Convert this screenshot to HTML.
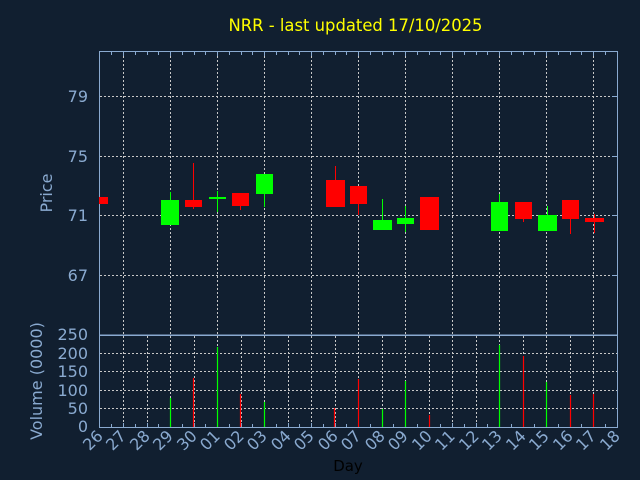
<!DOCTYPE html>
<html><head><meta charset="utf-8"><style>
html,body{margin:0;padding:0;background:#111f30;}
svg{display:block;font-family:"DejaVu Sans","Liberation Sans",sans-serif;}
</style></head><body>
<svg width="640" height="480" viewBox="0 0 640 480" xmlns="http://www.w3.org/2000/svg">
<rect width="640" height="480" fill="#111f30"/>
<text x="355.5" y="31" fill="#ffff00" font-size="16.4" text-anchor="middle">NRR - last updated 17/10/2025</text>
<g stroke="#c8c8c8" stroke-width="1" stroke-dasharray="2,2" fill="none">
<path d="M100 96.5H617M100 156.5H617M100 215.5H617M100 275.5H617"/>
<path d="M123.5 52V335M170.5 52V335M217.5 52V335M264.5 52V335M311.5 52V335M358.5 52V335M405.5 52V335M452.5 52V335M499.5 52V335M546.5 52V335M593.5 52V335"/>
<path d="M100 353.5H617M100 371.5H617M100 390.5H617M100 408.5H617"/>
<path d="M123.5 336V427M147.5 336V427M170.5 336V427M194.5 336V427M217.5 336V427M241.5 336V427M264.5 336V427M288.5 336V427M311.5 336V427M335.5 336V427M358.5 336V427M382.5 336V427M405.5 336V427M429.5 336V427M452.5 336V427M476.5 336V427M499.5 336V427M523.5 336V427M546.5 336V427M570.5 336V427M593.5 336V427"/>
</g>
<g stroke="#8aaad0" stroke-width="1" fill="none">
<rect x="99.5" y="51.5" width="518" height="283.5"/>
<rect x="99.5" y="335.5" width="518" height="92"/>
<path d="M111.5 52v3M123.5 52v4M135.5 52v3M147.5 52v3M158.5 52v3M170.5 52v4M182.5 52v3M194.5 52v3M205.5 52v3M217.5 52v4M229.5 52v3M241.5 52v3M252.5 52v3M264.5 52v4M276.5 52v3M288.5 52v3M299.5 52v3M311.5 52v4M323.5 52v3M335.5 52v3M346.5 52v3M358.5 52v4M370.5 52v3M382.5 52v3M393.5 52v3M405.5 52v4M417.5 52v3M429.5 52v3M440.5 52v3M452.5 52v4M464.5 52v3M476.5 52v3M487.5 52v3M499.5 52v4M511.5 52v3M523.5 52v3M534.5 52v3M546.5 52v4M558.5 52v3M570.5 52v3M581.5 52v3M593.5 52v4M605.5 52v3"/>
<path d="M111.5 427v-3M123.5 427v-4M135.5 427v-3M147.5 427v-4M158.5 427v-3M170.5 427v-4M182.5 427v-3M194.5 427v-4M205.5 427v-3M217.5 427v-4M229.5 427v-3M241.5 427v-4M252.5 427v-3M264.5 427v-4M276.5 427v-3M288.5 427v-4M299.5 427v-3M311.5 427v-4M323.5 427v-3M335.5 427v-4M346.5 427v-3M358.5 427v-4M370.5 427v-3M382.5 427v-4M393.5 427v-3M405.5 427v-4M417.5 427v-3M429.5 427v-4M440.5 427v-3M452.5 427v-4M464.5 427v-3M476.5 427v-4M487.5 427v-3M499.5 427v-4M511.5 427v-3M523.5 427v-4M534.5 427v-3M546.5 427v-4M558.5 427v-3M570.5 427v-4M581.5 427v-3M593.5 427v-4M605.5 427v-3"/>
<path d="M612 96.5h5M612 156.5h5M612 215.5h5M612 275.5h5"/>
</g>
<g stroke-width="1">
<rect x="99" y="197" width="9" height="7" fill="#ff0000"/>
<line x1="170.5" y1="192" x2="170.5" y2="224" stroke="#00ff00"/>
<rect x="161" y="200" width="18" height="25" fill="#00ff00"/>
<line x1="193.5" y1="163" x2="193.5" y2="209" stroke="#ff0000"/>
<rect x="185" y="200" width="17" height="7" fill="#ff0000"/>
<line x1="217.5" y1="191" x2="217.5" y2="212" stroke="#00ff00"/>
<rect x="209" y="197" width="17" height="2" fill="#00ff00"/>
<line x1="240.5" y1="193" x2="240.5" y2="210" stroke="#ff0000"/>
<rect x="232" y="193" width="17" height="13" fill="#ff0000"/>
<line x1="264.5" y1="174" x2="264.5" y2="207" stroke="#00ff00"/>
<rect x="256" y="174" width="17" height="20" fill="#00ff00"/>
<line x1="335.5" y1="166" x2="335.5" y2="207" stroke="#ff0000"/>
<rect x="326" y="180" width="19" height="27" fill="#ff0000"/>
<line x1="358.5" y1="186" x2="358.5" y2="215" stroke="#ff0000"/>
<rect x="350" y="186" width="17" height="18" fill="#ff0000"/>
<line x1="382.5" y1="199" x2="382.5" y2="230" stroke="#00ff00"/>
<rect x="373" y="220" width="19" height="10" fill="#00ff00"/>
<line x1="405.5" y1="206" x2="405.5" y2="232" stroke="#00ff00"/>
<rect x="397" y="218" width="17" height="6" fill="#00ff00"/>
<rect x="420" y="197" width="19" height="33" fill="#ff0000"/>
<line x1="499.5" y1="194" x2="499.5" y2="231" stroke="#00ff00"/>
<rect x="491" y="202" width="17" height="29" fill="#00ff00"/>
<line x1="523.5" y1="202" x2="523.5" y2="222" stroke="#ff0000"/>
<rect x="515" y="202" width="17" height="17" fill="#ff0000"/>
<line x1="547.5" y1="206" x2="547.5" y2="231" stroke="#00ff00"/>
<rect x="538" y="215" width="19" height="16" fill="#00ff00"/>
<line x1="570.5" y1="200" x2="570.5" y2="234" stroke="#ff0000"/>
<rect x="562" y="200" width="17" height="19" fill="#ff0000"/>
<line x1="594.5" y1="214" x2="594.5" y2="233" stroke="#ff0000"/>
<rect x="585" y="218" width="19" height="4" fill="#ff0000"/>
</g>
<g stroke-width="1.2">
<line x1="170.5" y1="398" x2="170.5" y2="427" stroke="#00ff00"/>
<line x1="193.5" y1="378" x2="193.5" y2="427" stroke="#ff0000"/>
<line x1="217.5" y1="347" x2="217.5" y2="427" stroke="#00ff00"/>
<line x1="240.5" y1="394" x2="240.5" y2="427" stroke="#ff0000"/>
<line x1="264.5" y1="402" x2="264.5" y2="427" stroke="#00ff00"/>
<line x1="334.5" y1="408" x2="334.5" y2="427" stroke="#ff0000"/>
<line x1="358.5" y1="379" x2="358.5" y2="427" stroke="#ff0000"/>
<line x1="382.5" y1="409" x2="382.5" y2="427" stroke="#00ff00"/>
<line x1="405.5" y1="381" x2="405.5" y2="427" stroke="#00ff00"/>
<line x1="429.5" y1="415" x2="429.5" y2="427" stroke="#ff0000"/>
<line x1="499.5" y1="345" x2="499.5" y2="427" stroke="#00ff00"/>
<line x1="523.5" y1="356" x2="523.5" y2="427" stroke="#ff0000"/>
<line x1="546.5" y1="382" x2="546.5" y2="427" stroke="#00ff00"/>
<line x1="570.5" y1="395" x2="570.5" y2="427" stroke="#ff0000"/>
<line x1="593.5" y1="394" x2="593.5" y2="427" stroke="#ff0000"/>
</g>
<g fill="#8aaad0" font-size="16" text-anchor="end">
<text x="88" y="102">79</text>
<text x="88" y="162">75</text>
<text x="88" y="221">71</text>
<text x="88" y="281">67</text>
<text x="88" y="340">250</text>
<text x="88" y="359">200</text>
<text x="88" y="377">150</text>
<text x="88" y="396">100</text>
<text x="88" y="414">50</text>
<text x="88" y="432">0</text>
</g>
<g fill="#8aaad0" font-size="16" text-anchor="middle">
<text transform="translate(52,193) rotate(-90)">Price</text>
<text transform="translate(42,381) rotate(-90)">Volume (0000)</text>
</g>
<g fill="#8aaad0" font-size="16" text-anchor="end">
<text transform="translate(104,437) rotate(-45)">26</text>
<text transform="translate(127,437) rotate(-45)">27</text>
<text transform="translate(151,437) rotate(-45)">28</text>
<text transform="translate(174,437) rotate(-45)">29</text>
<text transform="translate(198,437) rotate(-45)">30</text>
<text transform="translate(221,437) rotate(-45)">01</text>
<text transform="translate(245,437) rotate(-45)">02</text>
<text transform="translate(268,437) rotate(-45)">03</text>
<text transform="translate(292,437) rotate(-45)">04</text>
<text transform="translate(315,437) rotate(-45)">05</text>
<text transform="translate(339,437) rotate(-45)">06</text>
<text transform="translate(362,437) rotate(-45)">07</text>
<text transform="translate(386,437) rotate(-45)">08</text>
<text transform="translate(409,437) rotate(-45)">09</text>
<text transform="translate(433,437) rotate(-45)">10</text>
<text transform="translate(456,437) rotate(-45)">11</text>
<text transform="translate(480,437) rotate(-45)">12</text>
<text transform="translate(503,437) rotate(-45)">13</text>
<text transform="translate(527,437) rotate(-45)">14</text>
<text transform="translate(550,437) rotate(-45)">15</text>
<text transform="translate(574,437) rotate(-45)">16</text>
<text transform="translate(597,437) rotate(-45)">17</text>
<text transform="translate(621,437) rotate(-45)">18</text>
</g>
<text x="348" y="471" fill="#000000" font-size="15" text-anchor="middle">Day</text>
</svg>
</body></html>
